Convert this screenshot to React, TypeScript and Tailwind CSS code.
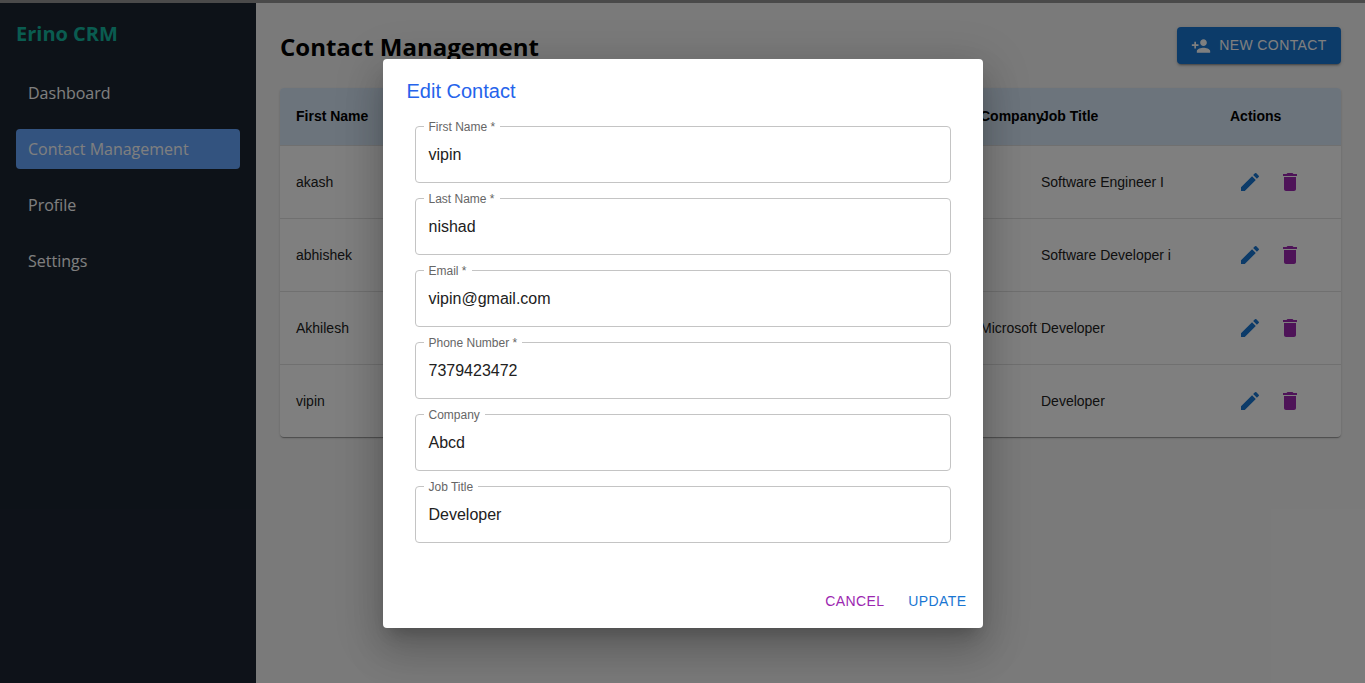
import React from 'react';
import { MdPersonAdd, MdEdit, MdDelete } from 'react-icons/md';

const navItems = ['Dashboard', 'Contact Management', 'Profile', 'Settings'];

const contacts = [
  { first: 'akash', company: '', job: 'Software Engineer I' },
  { first: 'abhishek', company: '', job: 'Software Developer i' },
  { first: 'Akhilesh', company: 'Microsoft Tech', job: 'Developer' },
  { first: 'vipin', company: '', job: 'Developer' },
];

const fields = [
  { label: 'First Name *', value: 'vipin' },
  { label: 'Last Name *', value: 'nishad' },
  { label: 'Email *', value: 'vipin@gmail.com' },
  { label: 'Phone Number *', value: '7379423472' },
  { label: 'Company', value: 'Abcd' },
  { label: 'Job Title', value: 'Developer' },
];

function Field({ label, value }: { label: string; value: string }) {
  return (
    <fieldset className="h-[64px] border border-[#c4c4c4] rounded-[4px] px-[13px]">
      <legend className="ml-[-5px] px-[5px] text-[12px] leading-[16px] text-[#666666]">{label}</legend>
      <div className="text-[16px] leading-[24px] text-[#212121] mt-[8px]">{value}</div>
    </fieldset>
  );
}

export default function App() {
  return (
    <div className="relative h-[683px] w-[1365px] overflow-hidden flex flex-col bg-[#f5f5f5] font-['Liberation_Sans',sans-serif]">
      <div className="h-[3px] shrink-0 bg-[#4a4a4a]" />
      <div className="flex flex-1 min-h-0">
        <aside className="w-[256px] shrink-0 bg-[#1b2431] p-[16px] font-['Open_Sans',sans-serif]">
          <div className="text-[20px] leading-[30px] font-bold text-[#14b8a0] mb-[24px]">Erino CRM</div>
          <nav className="flex flex-col gap-[16px]">
            {navItems.map((item) => (
              <div
                key={item}
                className={`h-[40px] rounded-[4px] px-[12px] flex items-center text-[16px] ${
                  item === 'Contact Management' ? 'bg-[#66a6fe] text-[#ffffff]' : 'text-[#ffffff]'
                }`}
              >
                {item}
              </div>
            ))}
          </nav>
        </aside>
        <main className="flex-1 min-w-0 p-[24px]">
          <div className="flex items-center justify-between mb-[24px] h-[37px]">
            <h1 className="text-[24px] font-bold text-black font-['Open_Sans',sans-serif] pt-[3px]">Contact Management</h1>
            <button className="h-[37px] w-[164px] rounded-[4px] bg-[#1976d2] text-white text-[14px] tracking-[0.4px] flex items-center justify-center gap-[8px] shadow-[0_3px_1px_-2px_rgba(0,0,0,0.2),0_2px_2px_0_rgba(0,0,0,0.14),0_1px_5px_0_rgba(0,0,0,0.12)]">
              <MdPersonAdd className="w-[20px] h-[20px]" />
              NEW CONTACT
            </button>
          </div>
          <div className="rounded-[4px] bg-white overflow-hidden shadow-[0_2px_1px_-1px_rgba(0,0,0,0.2),0_1px_1px_0_rgba(0,0,0,0.14),0_1px_3px_0_rgba(0,0,0,0.12)] text-[14px] text-[#212121]">
            <div className="h-[57px] bg-[#d9e8f8] flex items-center font-bold text-black">
              <div className="w-[700px] pl-[16px]">First Name</div>
              <div className="w-[61px] whitespace-nowrap">Company</div>
              <div className="w-[189px] pl-[0px]">Job Title</div>
              <div>Actions</div>
            </div>
            {contacts.map((c) => (
              <div key={c.first} className="h-[73px] border-t border-[#e0e0e0] flex items-center first:border-t-0">
                <div className="w-[700px] pl-[16px]">{c.first}</div>
                <div className="w-[61px] whitespace-nowrap overflow-hidden">{c.company}</div>
                <div className="w-[189px]">{c.job}</div>
                <div className="flex items-center gap-[16px] pl-[8px]">
                  <MdEdit className="w-[24px] h-[24px] text-[#1976d2]" />
                  <MdDelete className="w-[24px] h-[24px] text-[#9c27b0]" />
                </div>
              </div>
            ))}
          </div>
        </main>
      </div>

      <div className="absolute inset-x-0 top-[3px] bottom-0 bg-black/50 flex items-center justify-center">
        <div className="w-[600px] h-[569px] bg-white rounded-[4px] flex flex-col shadow-[0_11px_15px_-7px_rgba(0,0,0,0.2),0_24px_38px_3px_rgba(0,0,0,0.14),0_9px_46px_8px_rgba(0,0,0,0.12)]">
          <h2 className="px-[24px] pt-[20px] text-[20px] leading-[24px] text-[#2563eb]">Edit Contact</h2>
          <div className="px-[32px] pt-[16px] flex flex-col gap-[8px]">
            {fields.map((f) => (
              <Field key={f.label} label={f.label} value={f.value} />
            ))}
          </div>
          <div className="mt-auto flex justify-end gap-[8px] p-[8px] pb-[8px] text-[14px] tracking-[0.4px]">
            <button className="h-[36px] px-[8px] text-[#9c27b0]">CANCEL</button>
            <button className="h-[36px] px-[8px] text-[#1976d2]">UPDATE</button>
          </div>
        </div>
      </div>
    </div>
  );
}
